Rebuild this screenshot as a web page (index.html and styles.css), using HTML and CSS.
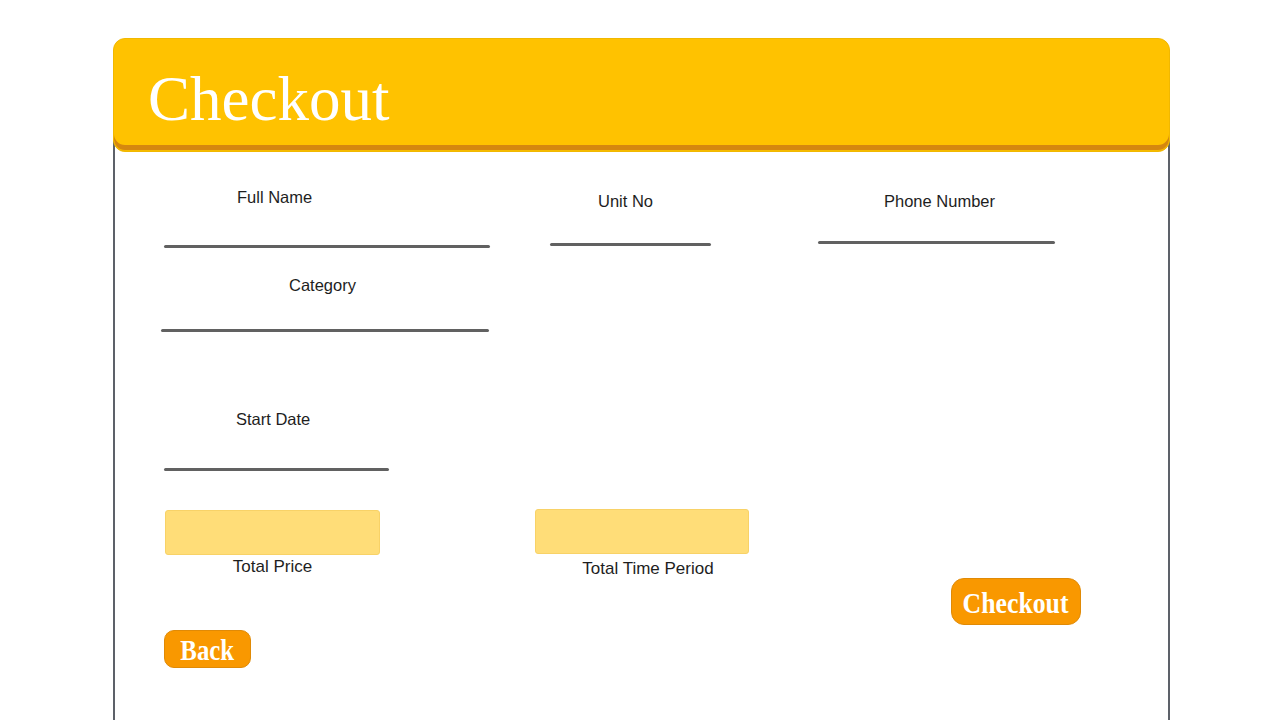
FILE: index.html
```html
<!DOCTYPE html>
<html lang="en">
<head>
<meta charset="utf-8">
<title>Checkout</title>
<link rel="stylesheet" href="styles.css">
</head>
<body>
<div class="panel">
  <header class="panel-head">
    <h1 class="title">Checkout</h1>
  </header>
  <main class="panel-body">
    <div class="row row-top">
      <div class="field f-name">
        <label class="label">Full Name</label>
        <div class="line"></div>
      </div>
      <div class="field f-unit">
        <label class="label">Unit No</label>
        <div class="line"></div>
      </div>
      <div class="field f-phone">
        <label class="label">Phone Number</label>
        <div class="line"></div>
      </div>
    </div>
    <div class="row row-cat">
      <div class="field f-cat">
        <label class="label">Category</label>
        <div class="line"></div>
      </div>
    </div>
    <div class="row row-date">
      <div class="field f-date">
        <label class="label">Start Date</label>
        <div class="line"></div>
      </div>
    </div>
    <div class="row row-totals">
      <div class="total t-price">
        <div class="total-box"></div>
        <div class="total-label">Total Price</div>
      </div>
      <div class="total t-period">
        <div class="total-box"></div>
        <div class="total-label">Total Time Period</div>
      </div>
    </div>
    <div class="row row-checkout">
      <button class="btn btn-checkout"><span class="btn-text">Checkout</span></button>
    </div>
    <div class="row row-back">
      <button class="btn btn-back"><span class="btn-text">Back</span></button>
    </div>
  </main>
</div>
</body>
</html>
```
FILE: styles.css
```css
html, body {
  margin: 0;
  padding: 0;
  background: #ffffff;
}
body {
  font-family: "Liberation Sans", Arial, sans-serif;
  color: #1d1d1d;
  height: 720px;
  overflow: hidden;
}
.panel {
  width: 1057px;
  margin: 38px 0 0 113px;
  display: flex;
  flex-direction: column;
}
.panel-head {
  box-sizing: border-box;
  height: 114px;
  background: #ffc200;
  border: 1px solid #f1b800;
  border-radius: 12px;
  padding: 29px 0 0 34px;
  box-shadow: inset 0 -1px 0 #f6bb00, inset 0 -6px 0 #d5870f;
  position: relative;
  z-index: 1;
}
.title {
  margin: 0;
  font-family: "Liberation Serif", "Times New Roman", serif;
  font-weight: normal;
  font-size: 63px;
  line-height: 63px;
  color: #ffffff;
}
.panel-body {
  box-sizing: border-box;
  height: 582px;
  margin-top: -14px;
  padding-top: 14px;
  border-left: 2px solid #5d6169;
  border-right: 2px solid #5d6169;
}
.row {
  display: flex;
  align-items: flex-start;
}
.field {
  display: flex;
  flex-direction: column;
}
.label {
  font-size: 16.5px;
  line-height: 20px;
  height: 20px;
  color: #1e1e1e;
}
.line {
  height: 3px;
  border-radius: 2px;
  background: #616161;
}
.row-top { padding-top: 35px; }
.f-name { margin-left: 49px; width: 326px; }
.f-name .label { padding-left: 73px; }
.f-name .line { margin-top: 38px; }
.f-unit { margin-left: 60px; width: 161px; margin-top: 4px; }
.f-unit .label { padding-left: 48px; }
.f-unit .line { margin-top: 32px; }
.f-phone { margin-left: 107px; width: 237px; margin-top: 4px; }
.f-phone .label { padding-left: 66px; }
.f-phone .line { margin-top: 30px; }

.row-cat { margin-top: 27px; }
.f-cat { margin-left: 46px; width: 328px; }
.f-cat .label { padding-left: 128px; }
.f-cat .line { margin-top: 34px; }

.row-date { margin-top: 77px; }
.f-date { margin-left: 49px; width: 225px; }
.f-date .label { padding-left: 72px; }
.f-date .line { margin-top: 39px; }

.row-totals { margin-top: 38px; }
.total { display: flex; flex-direction: column; }
.total-box {
  box-sizing: border-box;
  height: 45px;
  background: #ffdd78;
  border: 1px solid #f8d267;
  border-radius: 3px;
}
.total-label {
  font-size: 17px;
  line-height: 20px;
  text-align: center;
  color: #1e1e1e;
}
.t-price { margin-left: 50px; width: 215px; margin-top: 1px; }
.t-price .total-label { margin-top: 2px; }
.t-period { margin-left: 155px; width: 214px; }
.t-period .total-label { margin-top: 5px; padding-left: 12px; }

.row-checkout { justify-content: flex-end; padding-right: 87px; margin-top: -1px; }
.row-back { margin-top: 5px; padding-left: 49px; }

.btn {
  box-sizing: border-box;
  font-family: "Liberation Serif", "Times New Roman", serif;
  font-weight: bold;
  color: #ffffff;
  background: #f99800;
  border: 1px solid #e08a06;
  padding: 3px 0 0;
  display: flex;
  align-items: center;
  justify-content: center;
}
.btn-text {
  display: inline-block;
  transform: scale(0.92, 1.08);
}
.btn-checkout {
  width: 130px;
  height: 47px;
  border-radius: 13px;
  font-size: 28px;
}
.btn-back {
  width: 87px;
  height: 38px;
  border-radius: 10px;
  font-size: 27px;
}
```
